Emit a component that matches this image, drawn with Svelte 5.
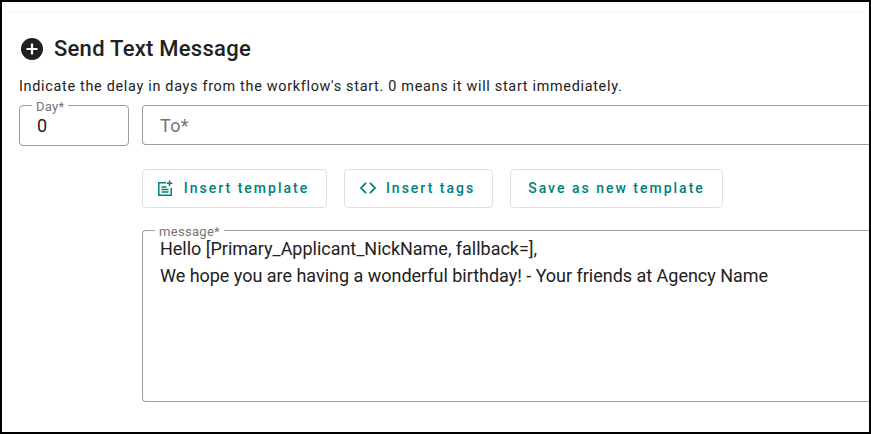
<script>
  const msg = ['Hello [Primary_Applicant_NickName, fallback=],', 'We hope you are having a wonderful birthday! - Your friends at Agency Name'];
</script>

<div class="frame">
  <div class="topline"></div>
  <h2 class="title">
    <svg class="plus" viewBox="0 0 22 22" width="22" height="22" aria-hidden="true">
      <circle cx="11" cy="11" r="11" fill="#212121" />
      <path d="M11 5.5v11M5.5 11h11" stroke="#fff" stroke-width="2.2" fill="none" />
    </svg>
    <span>Send Text Message</span>
  </h2>
  <p class="hint">Indicate the delay in days from the workflow's start. 0 means it will start immediately.</p>
  <div class="main">
    <div class="day">
      <fieldset class="box daybox"><legend>Day*</legend></fieldset>
      <span class="dayval">0</span>
    </div>
    <div class="right">
      <div class="to"><span>To*</span></div>
      <div class="buttons">
        <button class="b1">
          <svg viewBox="0 0 16 16" width="16" height="16" aria-hidden="true">
            <path d="M8 2.800H.8v12.400h12.400V8" fill="none" stroke="#00807a" stroke-width="1.500" />
            <path d="M3.500 7h5M3.500 9.500h7M3.500 12h7" stroke="#00807a" stroke-width="1.300" fill="none" />
            <path d="M11.500 .5v5.500M8.800 3.200h5.500" stroke="#00807a" stroke-width="1.500" fill="none" />
          </svg>
          Insert template
        </button>
        <button class="b2">
          <svg viewBox="0 0 16 16" width="16" height="16" aria-hidden="true">
            <path d="M6 2.800 1 8l5 5.200M10 2.800 15 8l-5 5.200" fill="none" stroke="#00807a" stroke-width="1.800" />
          </svg>
          Insert tags
        </button>
        <button class="b3">Save as new template</button>
      </div>
      <div class="message">
        <fieldset class="box msgbox"><legend>message*</legend></fieldset>
        <div class="msgtext">
          {#each msg as line}<div>{line}</div>{/each}
        </div>
      </div>
    </div>
  </div>
</div>

<style>
  :global(body) { margin: 0; background: #fff; }
  .frame {
    box-sizing: border-box;
    width: 871px;
    height: 434px;
    border: 2px solid #000;
    overflow: hidden;
    background: #fff;
    font-family: Roboto, sans-serif;
    color: #212121;
    padding-left: 17px;
  }
  .topline { height: 1px; margin: 10px 0 0 -17px; background: #f7f7f7; }
  .title {
    display: flex;
    align-items: center;
    gap: 11px;
    margin: 24px 0 0 2px;
    height: 24px;
    font-size: 22px;
    font-weight: 500;
    line-height: 24px;
    letter-spacing: 0.26px;
  }
  .plus { flex: none; }
  .hint {
    margin: 16px 0 0;
    height: 19px;
    font-size: 14.4px;
    line-height: 19px;
    letter-spacing: 0.7px;
    white-space: nowrap;
  }
  .main { display: flex; gap: 13px; margin-top: 9px; }
  .day { position: relative; width: 110px; height: 41px; flex: none; }
  .box {
    box-sizing: border-box;
    margin: 0;
    padding: 0 0 0 12px;
    border: 1px solid #9e9e9e;
    border-radius: 4px;
    min-width: 0;
  }
  .box legend {
    position: relative;
    top: 2px;
    padding: 0 4px;
    font-size: 13px;
    line-height: 12px;
    color: #757575;
    letter-spacing: 0.3px;
  }
  .daybox { position: absolute; left: 0; right: 0; top: -6px; bottom: 0; }
  .dayval { position: absolute; left: 18px; top: 10px; font-size: 18px; line-height: 22px; }
  .right { flex: none; width: 760px; }
  .to {
    box-sizing: border-box;
    height: 40px;
    border: 1px solid #9e9e9e;
    border-right: 0;
    border-radius: 4px 0 0 4px;
    padding-left: 17px;
    display: flex;
    align-items: center;
    font-size: 18px;
    letter-spacing: 0.3px;
    color: #757575;
  }
  .buttons { display: flex; gap: 17px; margin-top: 24px; }
  button {
    box-sizing: border-box;
    height: 39px;
    background: #fff;
    border: 1px solid #e0e0e0;
    border-radius: 4px;
    color: #00807a;
    font-family: Roboto, sans-serif;
    font-size: 14px;
    font-weight: 500;
    letter-spacing: 2px;
    display: flex;
    align-items: center;
    justify-content: center;
    gap: 10px;
    padding: 0 2px 2px 0;
  }
  .b1 { width: 185px; }
  .b2 { width: 149px; }
  .b3 { width: 213px; padding-right: 0; }
  .message { position: relative; height: 172px; margin-top: 22px; }
  .msgbox { position: absolute; inset: -6px -2px 0 0; border-radius: 4px 0 0 4px; border-right: 0; }
  .msgtext {
    position: absolute;
    left: 18px;
    top: 5px;
    font-size: 18px;
    line-height: 27px;
    letter-spacing: -0.02px;
    white-space: nowrap;
  }
</style>
